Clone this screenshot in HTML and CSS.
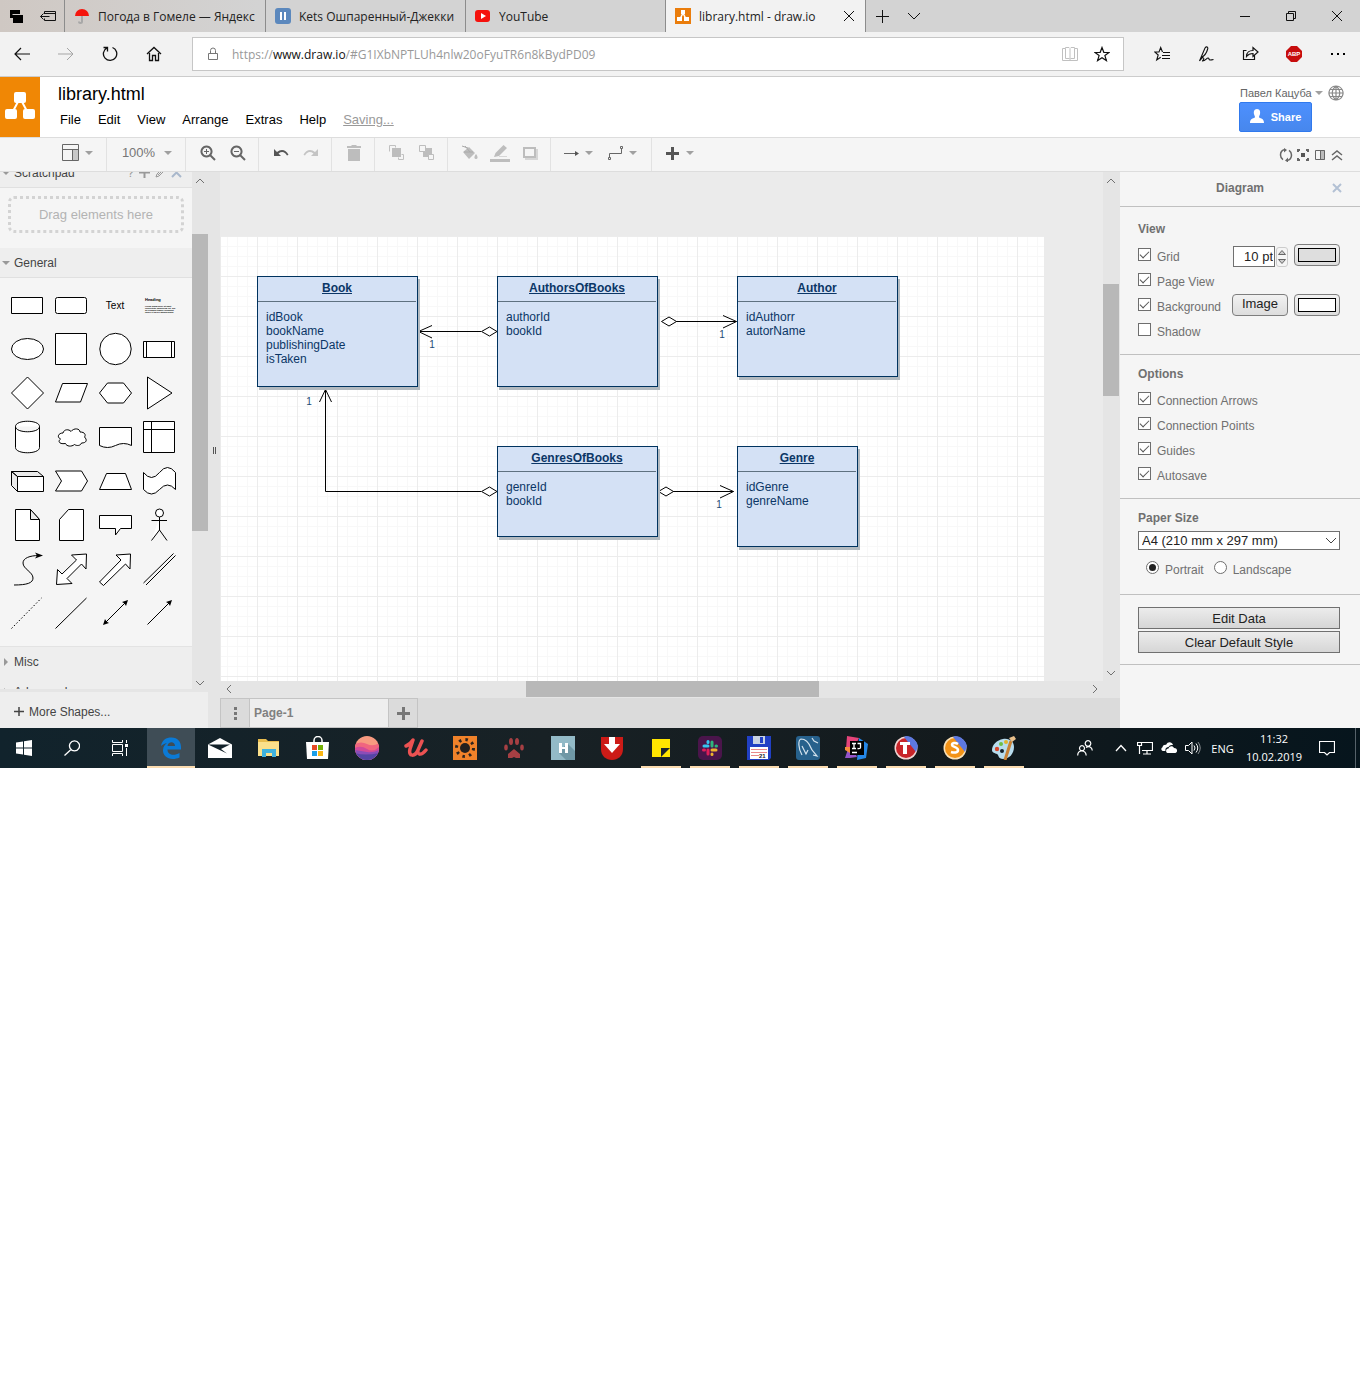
FILE: index.html
```html
<!DOCTYPE html>
<html lang="en">
<head>
<meta charset="utf-8">
<title>library.html - draw.io</title>
<link rel="stylesheet" href="styles.css">
</head>
<body>
<div class="desktop">

<div class="tabstrip">
  <button class="strip-btn" aria-label="Tabs set aside"><svg width="16" height="16"><path fill="#000" d="M2 2h10v8H2zM5 7h10v8H5z"/><path d="M4.500 6.500h8" stroke="#d0ccc9"/></svg></button>
  <button class="strip-btn" aria-label="Set tabs aside"><svg class="ic" width="16" height="16"><path d="M4.500 6v-2.500h11v9h-11v-2M5 5.500h10M.5 8.500h9M3.500 5.500l-3 3 3 3"/></svg></button>
  <button class="tab"><svg width="16" height="16"><path fill="#f5150d" d="M1 8a7 7 0 0 1 14 0z"/><path d="M8 8v5.500a1.500 1.500 0 0 1-3 0" fill="none" stroke="#a8a8a8" stroke-width="2"/></svg><span>Погода в Гомеле — Яндекс</span></button>
  <button class="tab"><svg width="16" height="16"><rect width="16" height="16" rx="3" fill="#5b88bd"/><path fill="#fff" d="M5 4h2v8H5zM9 4h2v8H9z"/></svg><span>Kets Ошпаренный-Джекки</span></button>
  <button class="tab"><svg width="16" height="16"><rect y="2" width="15" height="12" rx="3" fill="#f5120d"/><path fill="#fff" d="M6 5l5 3-5 3z"/></svg><span>YouTube</span></button>
  <button class="tab active"><svg width="16" height="16"><rect width="16" height="16" fill="#ea7d0c"/><path d="M8 5L5 11M8 5l3 6" stroke="#fff" stroke-width="1.500"/><path fill="#fff" d="M6 2h4v4H6zM2 9h5v4H2zM9 9h5v4H9z"/></svg><span>library.html - draw.io</span><svg class="ic close" width="12" height="12"><path d="M1 1l10 10M11 1L1 11"/></svg></button>
  <button class="strip-btn" aria-label="New tab"><svg class="ic" width="14" height="14"><path d="M7.500 1v13M1 7.500h13"/></svg></button>
  <button class="strip-btn" aria-label="Tab previews"><svg class="ic" width="14" height="8"><path d="M1 1l6 6 6-6"/></svg></button>
  <div class="window-btns">
    <button aria-label="Minimize"><svg class="ic" width="12" height="12"><path d="M1 6.500h10"/></svg></button>
    <button aria-label="Restore"><svg class="ic" width="12" height="12"><path d="M1.500 3.500h7v7h-7zM3.500 3V1.500h7v7H9"/></svg></button>
    <button aria-label="Close"><svg class="ic" width="12" height="12"><path d="M1 1l10 10M11 1L1 11"/></svg></button>
  </div>
</div>

<div class="navbar">
  <button class="nav-btn" aria-label="Back"><svg class="ic" width="16" height="14"><path d="M1 7h15M7 1L1 7l6 6" stroke-width="1.200"/></svg></button>
  <button class="nav-btn dim" aria-label="Forward"><svg class="ic" width="16" height="14"><path d="M0 7h15M9 1l6 6-6 6"/></svg></button>
  <button class="nav-btn" aria-label="Refresh"><svg class="ic" width="16" height="16"><path d="M10.500 1.500a6.700 6.700 0 1 1-5.500.3M1.500 1.500h4v4" stroke-width="1.300"/></svg></button>
  <button class="nav-btn" aria-label="Home"><svg class="ic" width="16" height="16"><path d="M1 8l7-6.500L15 8M3.500 7v7.500h3v-5h3v5h3V7" stroke-width="1.300"/></svg></button>
  <div class="address">
    <svg class="ic lock" width="12" height="14"><path d="M1.500 6.500h9v6h-9zM3.500 6V3.500a2.500 2.500 0 0 1 5 0V6"/></svg>
    <a class="url" href="#">https://<b>www.draw.io</b>/#G1IXbNPTLUh4nlw20oFyuTR6n8kBydPD09</a>
    <button class="addr-btn reader" aria-label="Reading view"><svg class="ic" width="16" height="16"><path d="M.5 2.500h3v-1h3.500l1 1 1-1h3.500v1h3v12h-15zM3.500 2.500v10h4M12.500 2.500v10h-4M8 3v11" /></svg></button>
    <button class="addr-btn" aria-label="Add to favorites"><svg class="ic" width="16" height="16"><path d="M8 1.500l1.800 4.800 5.200.2-4.100 3.100 1.500 5L8 11.700l-4.400 2.900 1.500-5L1 6.500l5.200-.2z" stroke-width="1.200"/></svg></button>
  </div>
  <button class="nav-btn" aria-label="Hub"><svg class="ic" width="16" height="16"><path d="M8.500 6L6.700 1.500 5 6H.7l3.500 3-1.500 5 4-2.700M9 6.500h7M8 9.500h8M8 12.500h8" stroke-width="1.100"/></svg></button>
  <button class="nav-btn" aria-label="Web notes"><svg class="ic" width="16" height="16"><path d="M1.500 15L7 2c1.500-2 3.500-1 2.500 1.500-.8 3-3.500 6.500-6 8M1.500 15l3-3.500c3 1 0 3 0 3.500 3 0 4-3 5.500-3s.5 2 2 2 1.500 0 3.500-.500" stroke-width="1.100"/></svg></button>
  <button class="nav-btn" aria-label="Share"><svg class="ic" width="17" height="16"><path d="M4.500 4.500h-3v9h11v-4M4.500 10.500c0-4 3-6 6.500-6v-3l5 4.500-5 4.500v-3c-3 0-5 1-6.500 3z" stroke-width="1.200"/></svg></button>
  <button class="nav-btn" aria-label="Adblock"><svg width="16" height="16"><path fill="#c70d0d" d="M5 0h6l5 5v6l-5 5H5l-5-5V5z"/><text x="8" y="10" class="abp">ABP</text></svg></button>
  <button class="nav-btn" aria-label="Settings"><svg width="16" height="4"><path d="M1 1h2v2H1zM7 1h2v2H7zM13 1h2v2h-2z"/></svg></button>
</div>

<header class="app-head">
  <a class="logo" href="#" aria-label="Home page"><svg width="30" height="30"><path d="M15 6L6 23M15 6l9 17" stroke="#fff" stroke-width="2"/><g fill="#fff"><rect x="9" y="0" width="12" height="11" rx="2"/><rect x="0" y="17" width="12" height="10" rx="2"/><rect x="18" y="17" width="12" height="10" rx="2"/></g></svg></a>
  <div class="title-col">
    <h1>library.html</h1>
    <nav class="menus"><button>File</button><button>Edit</button><button>View</button><button>Arrange</button><button>Extras</button><button>Help</button><a href="#">Saving...</a></nav>
  </div>
  <div class="user-col">
    <div class="user"><button>Павел Кацуба<i class="caret"></i></button><button aria-label="Language"><svg class="ic" width="16" height="16"><path stroke-width="1.200" d="M8 1a7 7 0 1 0 .01 0zM8 1c-5 4-5 10 0 14 5-4 5-10 0-14zM8 1v14M1 8h14M2 4.500h12M2 11.500h12"/></svg></button></div>
    <button class="share"><svg width="16" height="16"><path fill="#fff" d="M8 0c3 0 3.500 3 3 5-.3 1.500-1 2-1 3.500 2 1 5 1 5 5.500H1c0-4.500 3-4.500 5-5.500C6 7 5.300 6.500 5 5c-.5-2 0-5 3-5z"/></svg>Share</button>
  </div>
</header>

<div class="toolbar">
  <div class="grp first"><button class="wide" aria-label="View layout"><svg width="18" height="17" class="ic"><path fill="#c8c8c8" stroke="none" d="M11 6h6v10h-6z"/><path d="M.5.5h16v16H.5zM.5 5.500h16M10.500 5.500v11"/></svg><i class="caret"></i></button></div>
  <div class="grp"><button class="zoom">100%<i class="caret"></i></button></div>
  <div class="grp"><button aria-label="Zoom in"><svg class="ic" width="16" height="16"><path d="M6.500 1.500a5 5 0 1 0 .01 0zM10.500 10.500l4.500 4.500" stroke-width="2"/><path d="M4 6.500h5M6.500 4v5"/></svg></button><button aria-label="Zoom out"><svg class="ic" width="16" height="16"><path d="M6.500 1.500a5 5 0 1 0 .01 0zM10.500 10.500l4.500 4.500" stroke-width="2"/><path d="M4 6.500h5"/></svg></button></div>
  <div class="grp"><button aria-label="Undo"><svg width="16" height="12"><path fill="#555" d="M1 2v7h7L5.500 6.500C9 4 12 5 14 8.500l1.500-.7C13 2.500 8 1.500 4 5z"/></svg></button><button class="off" aria-label="Redo"><svg width="16" height="12"><path fill="#c4c4c4" d="M15 2v7H8l2.500-2.500C7 4 4 5 2 8.500L.5 7.800C3 2.500 8 1.500 12 5z"/></svg></button></div>
  <div class="grp"><button class="off" aria-label="Delete"><svg width="16" height="16"><path fill="#bdbdbd" d="M1 1h4l1-1h4l1 1h4v2H1zM2 4h12v12H2z"/></svg></button></div>
  <div class="grp"><button class="off" aria-label="To front"><svg width="16" height="16" fill="none" stroke="#c0c0c0"><path fill="#bdbdbd" d="M3 3h9v9H3z" stroke="none"/><path d="M.5 6.500V.5h6v2M9.500 12.500v2h5v-5h-2"/></svg></button><button class="off" aria-label="To back"><svg width="16" height="16"><path fill="#bdbdbd" d="M4 3h9v9H4z"/><path fill="#f5f5f5" stroke="#bdbdbd" d="M.5.5h6v6h-6zM9.500 9.500h5v5h-5z"/></svg></button></div>
  <div class="grp"><button class="off" aria-label="Fill color"><svg width="18" height="16"><path fill="#bdbdbd" d="M2 7l6-5 6 6-6 6z M15 9c3 4 1 5 0 5s-3-1 0-5z"/><path d="M4 1l5 6M3 7h9M7 3L1 1" stroke="#aaa" fill="none"/></svg></button><button class="off" aria-label="Line color"><svg width="20" height="18"><path fill="#bdbdbd" d="M0 15h20v3H0zM4 13l1.500-4 8-8 3.500 3-8 8z"/><path d="M9 12.500h8" stroke="#d6d6d6"/></svg></button><button class="off" aria-label="Shadow"><svg width="16" height="14"><path fill="#d6d6d6" d="M3 3h13v11H3z"/><path fill="#f5f5f5" stroke="#bdbdbd" stroke-width="2" d="M2 2h11v9H2z"/></svg></button></div>
  <div class="grp"><button class="wide" aria-label="Connection"><svg class="ic" width="18" height="12"><path d="M2 6.500h13"/><path fill="#555" stroke="none" d="M13 4l4 2.500L13 9z"/></svg><i class="caret"></i></button><button class="wide" aria-label="Waypoints"><svg class="ic" width="18" height="16"><path d="M2.500 12.500h2v2h-2zM14.500 1.500h2v2h-2zM3.500 12V8.500h12V4"/></svg><i class="caret"></i></button></div>
  <div class="grp last"><button class="wide" aria-label="Insert"><svg width="18" height="14"><path fill="#555" d="M8 1h3v5h5v3h-5v5H8V9H3V6h5z"/></svg><i class="caret"></i></button></div>
  <div class="tool-right">
    <button aria-label="Sync"><svg class="ic" width="14" height="14"><path d="M6 1.500C3 2 1.500 4 1.500 7S3 11 4 11.700M8 12.500c3-.5 4.500-2.500 4.500-5.500S11 3 10 2.300" stroke-width="1.500"/><path fill="#666" stroke="none" d="M5 0l3 2-3 2.500zM9 9.500v5L6 12.500z"/></svg></button>
    <button aria-label="Fullscreen"><svg class="ic" width="14" height="14"><path d="M4 2H2v2M10 2h2v2M4 12H2v-2M10 12h2v-2" stroke-width="2"/><path fill="#555" stroke="none" d="M5 5h4v4H5z"/></svg></button>
    <button aria-label="Format panel"><svg class="ic" width="14" height="14"><path fill="#bbb" stroke="none" d="M8 2h4v10H8z"/><path d="M2.500 2.500h9v9h-9zM7.500 2v10"/></svg></button>
    <button aria-label="Collapse"><svg class="ic" width="14" height="14"><path d="M2 7l5-4 5 4M2 12l5-4 5 4" stroke-width="1.500"/></svg></button>
  </div>
</div>

<main class="workspace">
  <aside class="sidebar">
    <div class="palette-wrap">
      <div class="palette">
        <div class="pal-title scratch"><i class="tri-d"></i>Scratchpad<span class="pal-tools"><span>?</span><svg class="ic" width="11" height="11"><path d="M5.500 0v11M0 5.500h11" stroke-width="2"/></svg><svg class="ic" width="11" height="11"><path d="M1 10l1-3 6-6 2 2-6 6zM3 8l6-6"/></svg><svg class="ic blue" width="11" height="11"><path d="M1 1l9 9M10 1l-9 9" stroke-width="2"/></svg></span></div>
        <div class="pad"><div class="drop">Drag elements here</div></div>
        <div class="pal-title"><i class="tri-d"></i>General</div>
        <div class="shapes">
          <button aria-label="Rectangle"><svg><path d="M6.500 14.500h31v16h-31z"/></svg></button>
          <button aria-label="Rounded rectangle"><svg><rect x="6.500" y="14.500" width="31" height="16" rx="2"/></svg></button>
          <button aria-label="Text"><svg><text x="22" y="26" class="t-text">Text</text></svg></button>
          <button aria-label="Textbox"><svg><text x="8" y="18" class="t-head">Heading</text><g class="t-body"><text x="8" y="24">Lorem ipsum dolor sit amet</text><text x="8" y="26">consectetur adipisicing elit, sed</text><text x="8" y="28">do eiusmod tempor incididunt</text><text x="8" y="30">labore et dolore magna aliqua</text></g></svg></button>
          <button aria-label="Ellipse"><svg><ellipse cx="22.500" cy="22" rx="16" ry="10.500"/></svg></button>
          <button aria-label="Square"><svg><path d="M6.500 6.500h31v31h-31z"/></svg></button>
          <button aria-label="Circle"><svg><circle cx="22.500" cy="22" r="15.700"/></svg></button>
          <button aria-label="Process"><svg><path d="M6.500 14.500h31v16h-31zM9.500 14.500v16M34.500 14.500v16"/></svg></button>
          <button aria-label="Diamond"><svg><path d="M22.500 6l16 16-16 16-16-16z"/></svg></button>
          <button aria-label="Parallelogram"><svg><path d="M6.500 31l7-18.500h25l-7 18.500z"/></svg></button>
          <button aria-label="Hexagon"><svg><path d="M6.500 22l8-10h16l8 10-8 10h-16z"/></svg></button>
          <button aria-label="Triangle"><svg><path d="M10.500 6l24.500 16-24.500 16z"/></svg></button>
          <button aria-label="Cylinder"><svg><path d="M10.500 11.500c0-7 24-7 24 0v21c0 7-24 7-24 0zc0 7 24 7 24 0"/></svg></button>
          <button aria-label="Cloud"><svg><path d="M14 18c1-4 6-4 8-1.500 3-4 9-3 9 .5 5 0 6 3 4.500 5 3 3 2 6-3 6-1 3-5 3-7 1.500-3 2.500-8 2-9-1-6 1-8-2-5-4.500-4-2-2-6 2.500-6z"/></svg></button>
          <button aria-label="Document"><svg><path d="M6.500 12.500h32v18q-8-4-16 0t-16 0z"/></svg></button>
          <button aria-label="Internal storage"><svg><path d="M6.500 6.500h31v31h-31zM14.500 6.500v31M6.500 14.500h31"/></svg></button>
          <button aria-label="Cube"><svg><path class="grey" d="M6.500 12.500h26l6 5h-26zM6.500 12.500l6 5v15l-6-6z"/><path d="M12.500 17.500h26v15h-26z"/></svg></button>
          <button aria-label="Step"><svg><path d="M6.500 12h26l6 10-6 10h-26l6-10z"/></svg></button>
          <button aria-label="Trapezoid"><svg><path d="M6.500 30.500l7-16h19l6 16z"/></svg></button>
          <button aria-label="Tape"><svg><path d="M6.500 13.500q8 10 16 0t16 0v17q-8-9-16 0t-16 0z"/></svg></button>
          <button aria-label="Note"><svg><path d="M10.500 6.500h15l9 10v21h-24z"/><path class="grey" d="M25.500 6.500v10h9z"/></svg></button>
          <button aria-label="Card"><svg><path d="M19.500 6.500h15v31h-24v-21z"/></svg></button>
          <button aria-label="Callout"><svg><path d="M6.500 12.500h32v13h-11l-5 6.500v-6.500h-16z"/></svg></button>
          <button aria-label="Actor"><svg><circle cx="22.500" cy="10" r="4"/><path d="M22.500 14v13l-8 10.500M22.500 27l7.500 10.500M14.500 17.500h15.500"/></svg></button>
          <button aria-label="Curve"><svg><path fill="none" d="M9 38c13 0 19-2 19-7 0-6-10-9-10-15 0-5 7-7.500 16-7.500"/><path class="head" d="M38 8.500l-8-3 2 3-2 3z"/></svg></button>
          <button aria-label="Bidirectional arrow"><svg><path d="M37.500 7l-.5 15-4.500-5-14.500 14.500 5 5-15.500 1 1-15 4.500 4.500 14.500-14-5-5z"/></svg></button>
          <button aria-label="Arrow"><svg><path d="M37.500 7l-.5 15-4.500-5-22 21.500-4-3.500 21.500-22-5-5z"/></svg></button>
          <button aria-label="Link"><svg><path d="M6.500 36l30-29.500M9 38l29.500-29.500"/></svg></button>
          <button aria-label="Dashed line"><svg><path stroke-dasharray="1.500 2" d="M6.500 37.500L36.500 7"/></svg></button>
          <button aria-label="Line"><svg><path d="M6.500 37.500L37.500 7"/></svg></button>
          <button aria-label="Bidirectional connector"><svg><path d="M12 32L33 11"/><path class="head" d="M35 9l-6 2 2.500 1.500 1.500 2.500zM10 34l6-2-2.500-1.500-1.500-2.500z"/></svg></button>
          <button aria-label="Directional connector"><svg><path d="M10.500 33.500L33 11"/><path class="head" d="M35 9l-6 2 2.500 1.500 1.500 2.500z"/></svg></button>
        </div>
        <div class="pal-title closed"><i class="tri-r"></i>Misc</div>
        <div class="pal-title closed"><i class="tri-r"></i>Advanced</div>
      </div>
      <div class="vscroll side-scroll"><svg class="ic" width="16" height="17"><path d="M4 11l4-4 4 4"/></svg><i></i><b></b><i></i><svg class="ic" width="16" height="17"><path d="M4 9l4 4 4-4"/></svg></div>
    </div>
    <button class="more"><svg width="10" height="10"><path stroke="#444" stroke-width="1.500" d="M5 0v9M0 4.500h10"/></svg>More Shapes...</button>
  </aside>
  <div class="splitter"><i></i></div>
  <section class="editor">
    <div class="canvas-row">
      <div class="canvas">
        <div class="paper">
          <svg class="edges" width="824" height="445">
            <g fill="none" stroke="#000">
              <path d="M197.500 95.500H260M211 89.500l-13.500 6 13.500 6.500"/>
              <path d="M455 85.500h60.500M502 79.500l13.500 6-13.500 6.500"/>
              <path d="M260 255.500H104.500V153.500M98.500 166l6-12.500 6 12.500"/>
              <path d="M452 255.500h60.500M499 249.500l13.500 6-13.500 6.500"/>
              <path fill="#fff" d="M260.500 95.500l8-4.500 7.500 4.500-7.500 4.500zM440.500 85.500l7.500-4.500 7.500 4.500-7.500 4.500zM260.500 255.500l8-4.500 7.500 4.500-7.500 4.500zM437.500 255.500l7.500-4.500 7.500 4.500-7.500 4.500z"/>
            </g>
            <g class="mult"><text x="211" y="112">1</text><text x="501" y="102">1</text><text x="88" y="169">1</text><text x="498" y="272">1</text></g>
          </svg>
          <div class="entity book"><h2>Book</h2><p>idBook<br>bookName<br>publishingDate<br>isTaken</p></div>
          <div class="entity authors-of-books"><h2>AuthorsOfBooks</h2><p>authorId<br>bookId</p></div>
          <div class="entity author"><h2>Author</h2><p>idAuthorr<br>autorName</p></div>
          <div class="entity genres-of-books"><h2>GenresOfBooks</h2><p>genreId<br>bookId</p></div>
          <div class="entity genre"><h2>Genre</h2><p>idGenre<br>genreName</p></div>
        </div>
      </div>
      <div class="vscroll main-scroll"><svg class="ic" width="16" height="17"><path d="M4 11l4-4 4 4"/></svg><i></i><b></b><i></i><svg class="ic" width="16" height="17"><path d="M4 7l4 4 4-4"/></svg></div>
    </div>
    <div class="hscroll"><svg class="ic" width="17" height="16"><path d="M11 4L7 8l4 4"/></svg><i></i><b></b><i></i><svg class="ic" width="17" height="16"><path d="M7 4l4 4-4 4"/></svg></div>
    <div class="pages">
      <button class="pg-btn" aria-label="Pages"><svg width="3" height="13"><path fill="#777" d="M0 0h3v3H0zM0 5h3v3H0zM0 10h3v3H0z"/></svg></button>
      <button class="pg-tab">Page-1</button>
      <button class="pg-btn add" aria-label="Insert page"><svg width="13" height="14"><path fill="#777" d="M5 1h3v5h5v3H8v5H5V9H0V6h5z"/></svg></button>
    </div>
  </section>
  <aside class="format">
    <div class="fmt-head"><strong>Diagram</strong><button aria-label="Close panel"><svg class="ic" width="10" height="10"><path d="M1 1l8 8M9 1L1 9" stroke-width="2"/></svg></button></div>
    <section class="view">
      <h3>View</h3>
      <div class="row"><label><input type="checkbox" checked>Grid</label><div class="ctl"><input class="num" type="text" value="10 pt" aria-label="Grid size"><span class="spin"><button aria-label="Increase"><svg width="10" height="9"><path fill="#ccc" stroke="#666" d="M1.500 6.500l3.500-4 3.500 4z"/></svg></button><button aria-label="Decrease"><svg width="10" height="9"><path fill="#ccc" stroke="#666" d="M1.500 2.500l3.500 4 3.500-4z"/></svg></button></span><button class="btn swatch" aria-label="Grid color"><i class="grey"></i></button></div></div>
      <div class="row"><label><input type="checkbox" checked>Page View</label></div>
      <div class="row"><label><input type="checkbox" checked>Background</label><div class="ctl"><button class="btn image">Image</button><button class="btn swatch" aria-label="Background color"><i></i></button></div></div>
      <div class="row"><label><input type="checkbox">Shadow</label></div>
    </section>
    <section class="options">
      <h3>Options</h3>
      <div class="row"><label><input type="checkbox" checked>Connection Arrows</label></div>
      <div class="row"><label><input type="checkbox" checked>Connection Points</label></div>
      <div class="row"><label><input type="checkbox" checked>Guides</label></div>
      <div class="row"><label><input type="checkbox" checked>Autosave</label></div>
    </section>
    <section class="paper-size">
      <h3><label for="paper">Paper Size</label></h3>
      <div class="select"><select id="paper"><option>A4 (210 mm x 297 mm)</option></select><svg class="ic" width="12" height="7"><path d="M1 1l5 5 5-5"/></svg></div>
      <div class="row radios"><label><input type="radio" name="orient" checked>Portrait</label><label><input type="radio" name="orient">Landscape</label></div>
    </section>
    <section class="actions"><button>Edit Data</button><button>Clear Default Style</button></section>
  </aside>
</main>

<div class="taskbar">
  <button class="sys" aria-label="Start"><svg width="16" height="16"><path fill="#fff" d="M0 2.500l7-1v6H0zM8 1.300L16 0v7.500H8zM0 8.500h7v6l-7-1zM8 8.500h8V16l-8-1.300z"/></svg></button>
  <button class="sys" aria-label="Search"><svg class="ic" width="16" height="16"><path d="M10.500.8a5 5 0 1 0 .01 0zM7 9.500L.5 15.500" stroke-width="1.300"/></svg></button>
  <button class="sys" aria-label="Task view"><svg class="ic" width="16" height="16"><path d="M.5 0v2.500h10V0M.5 4.500h10v7H.5zM.5 16v-2.500h10V16M14.500 0v3M14.500 8v8"/><path fill="#fff" stroke="none" d="M13 4h3v3h-3z"/></svg></button>
  <div class="apps">
    <button class="run current" aria-label="Edge"><svg width="20" height="22"><path fill="#0b7ad6" d="M0 9C1 3 5 .5 10.500.5 17 .5 20 5 20 10v2.500H6.500c0 6 7 6.500 12 3.500v4.500c-9 4-17-.5-16.500-7.500C2.200 9 4.500 7 6 6 3.500 6.500 1.500 7.500 0 9zM6.500 9h7.500c0-5-7-5-7.500 0z"/></svg></button>
    <button aria-label="Mail"><svg width="24" height="20"><path fill="#fff" d="M0 6.500L12 0l12 6.500V20H0z"/><path fill="#13222a" d="M0 6.500h22L13 11l6 4.500z"/></svg></button>
    <button aria-label="File Explorer"><svg width="22" height="20"><path fill="#e9bd4e" d="M0 1h8l2 2h11v5H0z"/><path fill="#fbe08b" d="M0 4h21v14H0z"/><path fill="#3fb2de" d="M4 19v-8h14v8h-4v-4H8v4z"/></svg></button>
    <button aria-label="Store"><svg width="24" height="24"><path d="M8 7V4.500a3.500 3.500 0 0 1 8 0V7" fill="none" stroke="#fff" stroke-width="1.500"/><path fill="#fff" d="M0 6h23l-1 17H1z"/><path fill="#e64a26" d="M6 9h5v5H6z"/><path fill="#73b006" d="M12 9h5v5h-5z"/><path fill="#1c9fe8" d="M6 15h5v5H6z"/><path fill="#fcb714" d="M12 15h5v5h-5z"/></svg></button>
    <button aria-label="Sunset"><svg width="24" height="24"><defs><clipPath id="disc"><circle cx="12" cy="12" r="12"/></clipPath></defs><g clip-path="url(#disc)"><path fill="#f79a80" d="M0 0h24v24H0z"/><path fill="#f0657f" d="M0 8q6-3 12 0t12-1v17H0z"/><path fill="#d14a99" d="M0 12q6-3 12 1t12-2v13H0z"/><path fill="#8a4db8" d="M0 14q6 1 12 2t12-2v10H0z"/><path fill="#5445a4" d="M0 17q10 3 24 0v7H0z"/></g></svg></button>
    <button aria-label="Udemy"><svg width="24" height="20"><path fill="none" stroke="#ec5252" stroke-width="3.500" stroke-linecap="round" stroke-linejoin="round" d="M2 8c3-1 5-3 7-6L6 11c-2 8 5 8 8 1l4-9-4 9c-1 6 4 5 8 0"/></svg></button>
    <button aria-label="Sun"><svg width="24" height="24"><path fill="#f0822a" d="M0 0h24v24H0z"/><circle cx="12" cy="12" r="8.500" fill="none" stroke="#2b2420" stroke-width="3" stroke-dasharray="2.500 4.200"/><circle cx="12" cy="12" r="5" fill="#22201f"/></svg></button>
    <button aria-label="Paw"><svg width="20" height="20" fill="#a63f43"><ellipse cx="7" cy="3.500" rx="2" ry="3.500"/><ellipse cx="13" cy="3.500" rx="2" ry="3.500"/><ellipse cx="2" cy="9.500" rx="1.800" ry="3"/><ellipse cx="18" cy="9.500" rx="1.800" ry="3"/><path d="M10 11l6 5v4h-4l-2-1-2 1H4v-4z"/></svg></button>
    <button aria-label="H"><svg width="24" height="24"><path fill="#93bac7" d="M0 0h24v24H0z"/><path fill="#6f98a6" d="M16 7l8 8v9H15L8 17z"/><path fill="#fff" d="M8 7h3v4h3V7h3v10h-3v-4h-3v4H8z"/></svg></button>
    <button aria-label="Downloader"><svg width="22" height="23"><path fill="#cc1b17" d="M0 0h22v12c0 7-5 11-11 11S0 19 0 12z"/><path fill="#fff" d="M8 0h6v7h5l-8 9-8-9h5z"/></svg></button>
    <button class="run" aria-label="Sticky Notes"><svg width="18" height="18"><path fill="#ffe500" d="M0 0h18v18H0z"/><path fill="#1b252c" d="M9 9h9l-9 9z"/></svg></button>
    <button class="run" aria-label="Slack"><svg width="24" height="24"><rect width="24" height="24" rx="5" fill="#4a154b"/><g stroke-width="3" stroke-linecap="round"><path stroke="#36c5f0" d="M6 10h4M10 5.500v1"/><path stroke="#2eb67d" d="M14 6v4M18 10h.5"/><path stroke="#ecb22e" d="M14 14h4M14 18v.500"/><path stroke="#e01e5a" d="M10 14v4M5.500 14h1"/></g></svg></button>
    <button class="run" aria-label="Total Commander"><svg width="24" height="24"><path fill="#2140c4" d="M0 0h24v22l-2 2H0z"/><path fill="#c9d3e3" d="M6 0h12v8H6z"/><path fill="#2140c4" d="M13 1h3v6h-3z"/><path fill="#fff" d="M3 11h18v12H3z"/><path stroke="#e8898a" d="M4 13.500h16M4 16.500h16M4 19.500h8"/><text x="12" y="22" class="save-n">21</text></svg></button>
    <button class="run" aria-label="MySQL Workbench"><svg width="24" height="24"><rect width="24" height="24" rx="3" fill="#27618c"/><path fill="none" stroke="#d5e4ee" stroke-width="1.200" d="M6 19C2 12 2 4 5 3c5 0 8 4 10 9 1 3 3 4 6 8l-4-1M6 10l4 8 2-4M16 2l2 3 4 2"/></svg></button>
    <button class="run" aria-label="IntelliJ IDEA"><svg width="24" height="24"><path fill="#e5447a" d="M2 0l12 2-4 8-9 3z"/><path fill="#2587e8" d="M14 2l9 6-2 14-9 2z"/><path fill="#9453c8" d="M0 22l3-9 6 1 3 7-7 1z"/><path fill="#f58c3b" d="M0 11l5 0v6l-5-3z"/><path fill="#000" d="M5 5h14v14H5z"/><path fill="none" stroke="#fff" stroke-width="1.300" d="M7 7.500h4M9 7.500v5M7 12.500h4M12.500 7.500h3v4q0 1.500-3 1M7 16.500h5"/></svg></button>
    <button class="run" aria-label="Turbo T"><svg width="24" height="24"><circle cx="12" cy="12" r="11.500" fill="#f3d6d4"/><circle cx="12" cy="12" r="10" fill="#c8252a"/><path fill="#5d78e0" d="M12 0c6 0 11 5 12 10l-2 6L10 1z"/><path fill="#fff" d="M6 6h10v3h-3v9h-4v-9H6z"/></svg></button>
    <button class="run" aria-label="Scan S"><svg width="24" height="24"><circle cx="12" cy="12" r="11.500" fill="#fbe1b6"/><circle cx="12" cy="12" r="10" fill="#f39317"/><path fill="#5d78e0" d="M12 0c6 0 11 5 12 10l-2 6L10 1z"/><path fill="none" stroke="#fff" stroke-width="2.500" d="M15 8c-3-2-6-1-6 1s6 2 6 5-4 3-7 2"/></svg></button>
    <button class="run" aria-label="Paint"><svg width="24" height="24"><path fill="#b8dced" d="M11 3c7-1 11 3 11 8 0 7-5 12-11 12-5 0-4-4-6-5s-5-1-5-4C0 9 5 4 11 3z"/><circle cx="5" cy="13" r="2.200" fill="#d9472b"/><circle cx="9" cy="8" r="2" fill="#6dbe45"/><circle cx="10" cy="15" r="2" fill="#14202a"/><circle cx="14" cy="6" r="2" fill="#e2b32c"/><path stroke="#c98236" stroke-width="3" d="M19 5l-6 19"/><path fill="#e9c08c" d="M17 2l5-2 2 3-4 3z"/></svg></button>
  </div>
  <div class="tray">
    <button class="people" aria-label="People"><svg class="ic" width="16" height="16"><path d="M11 .7a2.800 2.800 0 1 0 .01 0zM5 5.700a2.500 2.500 0 1 0 .01 0zM.7 15.500c0-6 8-6 8.500 0M9 7.500c3-2 6-.5 6.300 3" stroke-width="1.200"/></svg></button>
    <button aria-label="Hidden icons"><svg class="ic" width="12" height="8"><path d="M1 7l5-5.500L11 7" stroke-width="1.300"/></svg></button>
    <button aria-label="Network"><svg class="ic" width="16" height="14"><path d="M5 1.500h10.500v8H5M10 9.500v3M6 13h8M2.500 5v8M.5 1.500h4v3h-4z" stroke-width="1.200"/></svg></button>
    <button aria-label="OneDrive"><svg width="16" height="12"><path fill="#fff" d="M3 9C0 9-.5 6 1.500 5.200 2 3 4 2.500 5 3c2-4 6-3 7 0-3-.5-4 1-4.500 2C5 5 4 7 4.500 9z"/><path fill="#fff" d="M6.500 11c-2-.5-2-4.500 1-4.500 1-3 4.500-3 5.500-.5 4 0 4 5 .5 5z"/></svg></button>
    <button aria-label="Volume"><svg class="ic" width="16" height="14"><path d="M.5 4.500h3l3.500-3.500v12l-3.500-3.500h-3zM9 4.500q2 2.500 0 5M11 2.500q3.500 4.500 0 9"/><path opacity=".5" d="M13 1q4.500 6 0 12"/></svg></button>
    <button class="lang">ENG</button>
    <button class="clock">11:32<br>10.02.2019</button>
    <button class="note" aria-label="Notifications"><svg class="ic" width="16" height="16"><path d="M.5 1.500h15v11h-5l-2.500 2.500-2.500-2.500h-5z" stroke-width="1.200"/></svg></button>
    <i class="peek"></i>
  </div>
</div>

</div>
</body>
</html>
```
FILE: styles.css
```css
* { box-sizing: border-box; }
body { margin: 0; background: #fff; font-family: "Liberation Sans", Arial, sans-serif; font-size: 12px; color: #444; }
button { margin: 0; padding: 0; border: 0; background: none; font: inherit; color: inherit; display: flex; align-items: center; justify-content: center; white-space: nowrap; }
h1, h2, h3, p { margin: 0; font-weight: normal; }
svg { display: block; flex: none; }
.ic { fill: none; stroke: currentColor; }
.caret { width: 0; height: 0; flex: none; border: 4px solid transparent; border-top-color: #a0a0a0; border-bottom: 0; }

/* Browser chrome */
.tabstrip, .navbar, .taskbar { font-family: "Open Sans", "Noto Sans", sans-serif; }
.tabstrip { display: flex; height: 32px; background: linear-gradient(90deg, #cfc8c3, #d3d3d3 260px); color: #111; }
.strip-btn { width: 32px; }
.tab { flex: 0 1 201px; min-width: 0; justify-content: flex-start; gap: 8px; padding: 0 9px; border-left: 1px solid #8c8c8c; }
.tab + .tab { flex-basis: 200px; }
.tab span { flex: 1; overflow: hidden; text-align: left; color: #222; }
.tab.active { background: #f2f2f2; border-right: 1px solid #8c8c8c; flex-basis: 201px; }
.tab .close { margin-right: 1px; }
.window-btns { display: flex; margin-left: auto; }
.window-btns button { width: 46px; }
.navbar { display: flex; align-items: center; height: 45px; background: #f2f2f2; border-bottom: 1px solid #ccc; color: #111; }
.nav-btn { width: 44px; height: 34px; flex: none; }
.dim { color: #a5a5a5; }
.address { flex: 1; min-width: 0; display: flex; align-items: center; height: 34px; margin: 0 16px; padding: 0 5px 0 14px; background: #fff; border: 1px solid #c6c6c6; }
.lock { color: #777; }
.url { flex: 1; min-width: 0; margin-left: 13px; overflow: hidden; white-space: nowrap; color: #999; text-decoration: none; }
.url b { font-weight: normal; color: #111; }
.addr-btn { width: 32px; height: 32px; }
.reader { color: #c0c0c0; }
.abp { font: bold 6px "Liberation Sans", Arial, sans-serif; fill: #fff; text-anchor: middle; }

/* Application header */
.app-head { display: flex; height: 61px; border-bottom: 1px solid #ddd; background: #fff; }
.logo { width: 40px; height: 60px; display: flex; align-items: center; justify-content: center; background: #f08705; }
.title-col { padding: 6px 0 0 18px; color: #000; }
.title-col h1 { font-size: 18px; line-height: 22px; }
.menus { display: flex; gap: 17px; padding: 7px 0 0 2px; font-size: 13px; line-height: 16px; }
.menus a { color: #999; }
.user-col { margin-left: auto; display: flex; flex-direction: column; align-items: flex-start; width: 121px; padding-top: 7px; }
.user { display: flex; gap: 5px; height: 18px; padding-left: 1px; font-size: 11px; color: #666; }
.user button { gap: 3px; }
.user svg { color: #888; }
.share { gap: 6px; width: 73px; height: 30px; padding-right: 1px; border: 1px solid #3079ed; border-radius: 2px; background: linear-gradient(#4d90fe, #4787ed); color: #fff; font-size: 11px; font-weight: bold; }

/* Toolbar */
.toolbar { display: flex; height: 34px; padding-bottom: 4px; background: #f5f5f5; border-bottom: 1px solid #ddd; color: #666; }
.grp { display: flex; margin-bottom: -4px; padding: 0 5px 4px 7px; border-right: 1px solid #e2e2e2; }
.grp button { width: 30px; }
.grp button.wide { width: 44px; justify-content: flex-start; gap: 5px; padding-left: 4px; }
.grp.first { padding: 0 4px 4px 58px; }
.grp button.zoom { width: 66px; gap: 9px; font-size: 13px; color: #777; }
.grp.last { border: 0; }
.tool-right { display: flex; margin-left: auto; padding: 5px 16px 0 0; gap: 2px; }
.tool-right button { width: 15px; }

/* Workspace */
.workspace { display: grid; grid-template-columns: 208px 12px minmax(0, 1fr) 240px; background: #e5e5e5; }
.sidebar { display: flex; flex-direction: column; gap: 3px; min-height: 0; }
.palette-wrap { flex: 1 1 0; min-height: 0; display: flex; overflow: hidden; }
.palette { flex: 1; min-height: 0; margin-top: -14px; background: #f5f5f5; }
.pal-title { display: flex; align-items: center; gap: 4px; height: 30px; padding-left: 2px; background: #eee; border-bottom: 1px solid #e0e0e0; }
.pal-title.closed { border-color: #eee; }
.shapes + .closed { box-shadow: 0 -1px 0 #e3e3e3; }
.pal-tools { display: flex; align-items: center; gap: 5px; margin-left: auto; padding-right: 10px; color: #999; }
.blue { color: #a9b8cc; }
.tri-d { border: 4px solid transparent; border-top-color: #999; border-bottom: 0; }
.tri-r { border: 4px solid transparent; border-left-color: #999; border-right: 0; margin: 0 2px; }
.pad { height: 60px; padding: 8px; }
.drop { display: flex; align-items: center; justify-content: center; height: 37px; border: 3px dotted #d3d3d3; border-radius: 6px; font-size: 13px; color: #b3b3b3; }
.shapes { display: grid; grid-template-columns: repeat(4, 44px); padding: 5px 11px 12px 5px; }
.shapes svg { width: 44px; height: 44px; fill: #fff; stroke: #000; }
.shapes .grey { fill: #eaeaea; }
.shapes .head { fill: #000; stroke: none; }
.shapes text { fill: #000; stroke: none; }
.t-text { font-size: 10px; text-anchor: middle; }
.t-head { font-size: 4px; font-weight: bold; }
.t-body { font-size: 2px; font-weight: bold; }
.more { height: 36px; justify-content: flex-start; gap: 5px; padding: 3px 0 0 14px; background: #eee; }
.vscroll { display: flex; flex-direction: column; width: 16px; color: #707070; }
.vscroll b, .hscroll b { background: #b8b8b8; }
.side-scroll i:first-of-type { flex: 45; }
.side-scroll b { flex: 297; }
.side-scroll i:last-of-type { flex: 141; }
.splitter { display: flex; align-items: center; justify-content: center; }
.splitter i { width: 3px; height: 7px; border: solid #555; border-width: 0 1px; }
.editor { display: flex; flex-direction: column; min-width: 0; }
.canvas-row { flex: 1; display: flex; }
.canvas { flex: 1; min-width: 0; padding: 64px 59px 0 1px; overflow: hidden; background: #ebebeb; }
.paper { position: relative; min-height: 445px; background-color: #fff;
  background-image: linear-gradient(90deg, #ececec 1px, transparent 1px), linear-gradient(#ececec 1px, transparent 1px), linear-gradient(90deg, #f8f8f8 1px, transparent 1px), linear-gradient(#f8f8f8 1px, transparent 1px);
  background-size: 40px 40px, 40px 40px, 10px 10px, 10px 10px;
  background-position: 36px 0, 36px 0, 6px 0, 6px 0; }
.edges { position: absolute; top: 0; left: 0; }
.mult { font-size: 10px; fill: #234a75; text-anchor: middle; }
.entity { position: absolute; width: 161px; height: 111px; background: #d4e1f5; border: 1px solid #00335f; box-shadow: 2px 3px 0 #b3bac0; color: #0b3666; }
.entity h2 { height: 25px; margin-right: 1px; border-bottom: 1px solid #5f7180; font-size: 12px; line-height: 23px; font-weight: bold; text-align: center; text-decoration: underline; }
.entity p { padding: 8px; line-height: 14px; }
.book { left: 36px; top: 40px; }
.authors-of-books { left: 276px; top: 40px; }
.author { left: 516px; top: 40px; height: 101px; }
.genres-of-books { left: 276px; top: 210px; height: 91px; }
.genre { left: 516px; top: 210px; width: 121px; height: 101px; }
.main-scroll { width: 17px; padding-right: 1px; }
.main-scroll i:first-of-type { flex: 95; }
.main-scroll b { flex: 112; }
.main-scroll i:last-of-type { flex: 268; }
.hscroll { display: flex; height: 17px; padding: 0 17px 1px 0; color: #707070; }
.hscroll i:first-of-type { flex: 289; }
.hscroll b { flex: 293; }
.hscroll i:last-of-type { flex: 267; }
.pages { display: flex; height: 30px; background: #dbdbdb; }
.pg-btn { width: 30px; border: 1px solid #c4c4c4; }
.pg-tab { width: 138px; justify-content: flex-start; padding-left: 4px; background: #eee; border: solid #c4c4c4; border-width: 1px 0; font-weight: bold; color: #808080; }

/* Format panel */
.format { background: #f5f5f5; color: #707070; }
.format section { padding: 9px 20px 10px 18px; border-bottom: 1px solid #c0c0c0; }
.fmt-head { display: flex; align-items: center; height: 35px; padding: 0 18px 2px; border-bottom: 1px solid #c0c0c0; }
.fmt-head strong { flex: 1; padding-left: 10px; text-align: center; }
.fmt-head button { color: #b3c1d4; }
.format h3 { height: 20px; margin-bottom: 4px; font-size: 12px; line-height: 20px; font-weight: bold; }
.format section.view { padding-top: 12px; }
.view h3 { margin-bottom: 5px; }
.row { display: flex; align-items: center; justify-content: space-between; height: 25px; }
.row label { display: flex; align-items: center; gap: 6px; }
.row input[type=checkbox], .row input[type=radio] { appearance: none; width: 13px; height: 13px; margin: 0 0 4px; background: #fff; border: 1px solid #6e6e6e; }
.row input[type=checkbox]:checked::after { content: ""; display: block; width: 8px; height: 4px; margin: 2px 0 0 1px; border: solid #555; border-width: 0 0 1px 1px; transform: rotate(-45deg); }
.row input[type=radio] { border-radius: 50%; }
.row input[type=radio]:checked::after { content: ""; display: block; width: 7px; height: 7px; margin: 2px; border-radius: 50%; background: #222; }
.ctl { display: flex; align-items: center; gap: 6px; height: 22px; }
.num { width: 42px; height: 21px; margin: 0 -5px 0 0; padding: 0 1px; border: 1px solid #707070; background: #fff; font: 13px "Liberation Sans", Arial, sans-serif; color: #222; text-align: right; }
.spin { border: 1px solid #ccc; border-radius: 3px; }
.spin button { height: 9px; }
.btn { height: 22px; margin-bottom: 3px; border: 1px solid #7e7e7e; border-radius: 4px; background: linear-gradient(#f2f2f2, #ddd); font-size: 13px; color: #222; }
.image { width: 56px; padding-bottom: 3px; }
.swatch { width: 46px; }
.swatch i { width: 38px; height: 14px; border: 1px solid #000; background: #fff; }
.swatch .grey { background: #dedede; }
.format section.paper-size { padding-bottom: 12px; }
.paper-size h3 { margin-bottom: 3px; }
.select { display: grid; align-items: center; }
.select select { grid-area: 1 / 1; appearance: none; height: 19px; padding: 0 3px; border: 1px solid #707070; border-radius: 0; background: #fff; font: 13px "Liberation Sans", Arial, sans-serif; color: #222; }
.select svg { grid-area: 1 / 1; justify-self: end; margin-right: 3px; pointer-events: none; color: #444; }
.radios { justify-content: flex-start; gap: 10px; margin-top: 7px; padding-left: 8px; }
.format section.actions { display: grid; gap: 2px; padding: 12px 20px 11px 18px; }
.actions button { height: 22px; border: 1px solid #707070; background: linear-gradient(#ececec, #d6d6d6); font-size: 13px; color: #222; }

/* Windows taskbar */
.taskbar { display: flex; height: 40px; background: linear-gradient(90deg, #11232c, #182125 40%, #131a1d 70%, #06151d); color: #fff; }
.sys { width: 48px; }
.apps { display: flex; gap: 1px; margin-left: 3px; }
.apps button { position: relative; width: 48px; }
.run::after { content: ""; position: absolute; left: 4px; right: 4px; bottom: 0; height: 2px; background: #fbdcb0; }
.current { background: #3f4d56; }
.current::after { left: 0; right: 0; }
.save-n { font: bold 6px "Liberation Sans", Arial, sans-serif; fill: #222; }
.tray { display: flex; margin-left: auto; font-size: 11px; }
.tray button { width: 24px; }
.tray button.people { width: 36px; margin-right: 6px; }
.tray button.lang { width: 35px; }
.tray button.clock { width: 68px; line-height: 18px; }
.tray button.note { width: 38px; margin-right: 9px; }
.peek { width: 5px; border-left: 1px solid #56626a; }
```
